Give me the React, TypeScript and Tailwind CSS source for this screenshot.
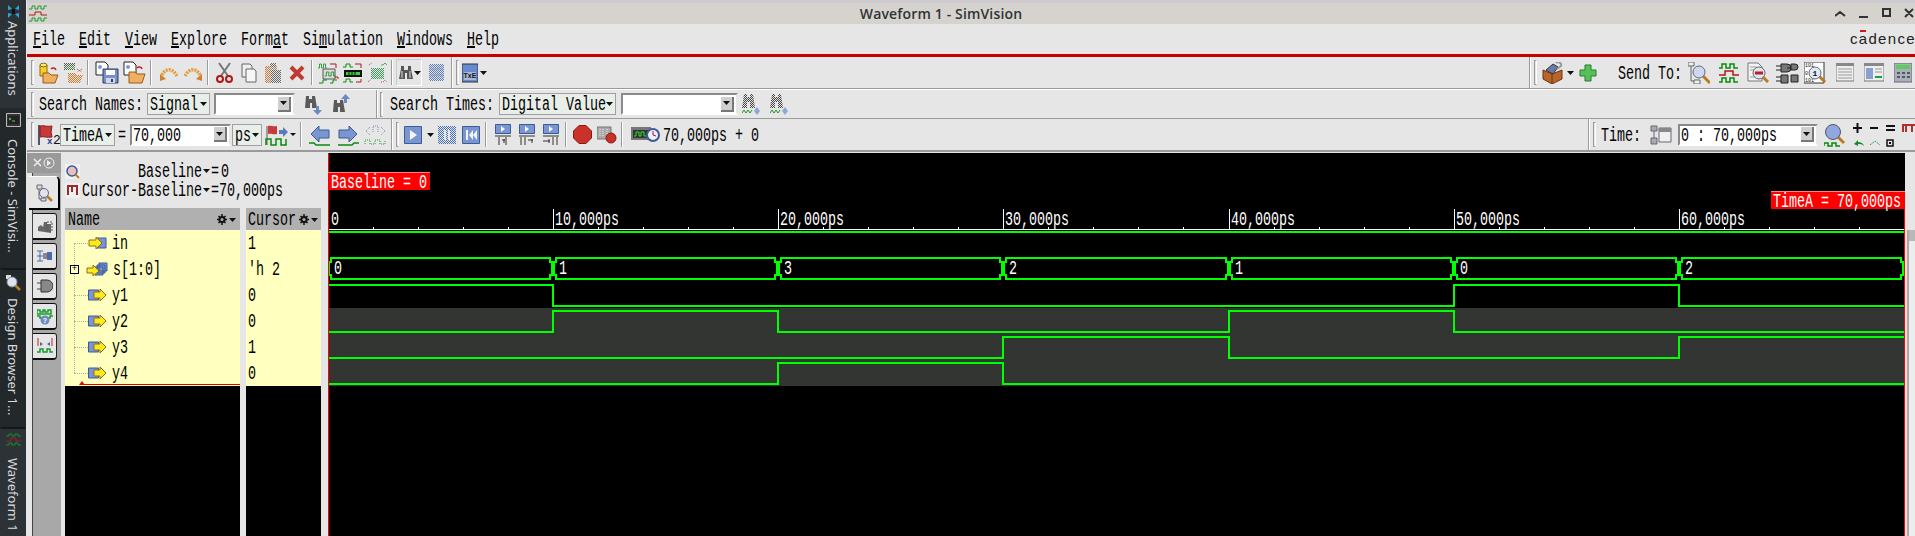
import React from 'react';

// SimVision waveform window. Toolbar text uses a squeezed mono font, it is the closest thing to the X11 bitmap font.
const ADV = 8;

function T({ text, u, className = '' }: { text: string; u?: number; className?: string }) {
  return (
    <span className={`flex h-[18px] shrink-0 ${className}`} style={{ width: text.length * ADV }}>
      <span className="block origin-left scale-x-[0.667] whitespace-pre font-['Liberation_Mono',monospace] text-[20px] leading-[20px]">
        {u === undefined ? text : (
          <>
            {text.slice(0, u)}
            <span className="underline">{text[u]}</span>
            {text.slice(u + 1)}
          </>
        )}
      </span>
    </span>
  );
}

function Ic({ w, h, className = '', children }: { w: number; h: number; className?: string; children: React.ReactNode }) {
  return (
    <svg width={w} height={h} viewBox={`0 0 ${w} ${h}`} className={`shrink-0 ${className}`}>
      {children}
    </svg>
  );
}

function Checker({ id, c }: { id: string; c: string }) {
  return (
    <defs>
      <pattern id={id} width="2" height="2" patternUnits="userSpaceOnUse">
        <rect width="1" height="1" fill={c} />
        <rect x="1" y="1" width="1" height="1" fill={c} />
      </pattern>
    </defs>
  );
}

const Handle = ({ className = '' }: { className?: string }) => (
  <div className={`h-[25px] w-[3px] shrink-0 rounded-[1px] border border-[#9a9a9a] border-r-white ${className}`} />
);
const Sep = ({ className = '' }: { className?: string }) => (
  <div className={`h-[25px] w-[2px] shrink-0 border-l border-r border-l-[#9a9a9a] border-r-white ${className}`} />
);
const VLine = ({ className = '' }: { className?: string }) => (
  <div className={`h-full w-[2px] shrink-0 border-l border-r border-l-[#9a9a9a] border-r-white ${className}`} />
);
const Caret = ({ className = '' }: { className?: string }) => (
  <Ic w={7} h={4} className={className}>
    <path d="M0 0h7L3.500 4z" fill="#111" />
  </Ic>
);

const wave = (x: number, y: number) => `M${x} ${y}h3v-4h4v4h4v-4h4v4h3`;

const OpenDb = () => (
  <Ic w={20} h={22}>
    <path d="M1 3h7v11H1z" fill="#f5d020" stroke="#8a6a10" />
    <ellipse cx="4.500" cy="3" rx="3.500" ry="1.800" fill="#ffe96a" stroke="#8a6a10" />
    <path d="M4 11h6l2 2h7l-3 8H4z" fill="#f0b060" stroke="#9a5a20" />
    <path d="M12 7a3 3 0 0 1 5 1" fill="none" stroke="#c02020" strokeWidth="1.500" />
  </Ic>
);
const OpenFaded = () => (
  <Ic w={21} h={22}>
    <Checker id="of1" c="#555" />
    <Checker id="of2" c="#d07a30" />
    <Checker id="of3" c="#3a9a3a" />
    <path d="M1 1h11v7H1z" fill="url(#of1)" />
    <path d="M5 11h7l2 2h6l-3 8H5z" fill="url(#of2)" />
    <path d="M3 4h9v3H3z" fill="url(#of3)" />
    <path d="M14 7l5 3M19 7l-5 3" stroke="#c04040" strokeDasharray="1 1" />
  </Ic>
);
const Save = () => (
  <Ic w={24} h={23}>
    <path d="M1 1h9l3 3v10H1z" fill="#fff" stroke="#222" />
    <circle cx="5" cy="6" r="2" fill="#7a9ad0" />
    <path d="M8 8h15v14H8z" fill="#7890c8" stroke="#2a3a70" />
    <path d="M11 9h9v5h-9z" fill="#fff" />
    <path d="M11 17h9v5h-9z" fill="#d0d8ea" />
    <path d="M16 18h2v3h-2z" fill="#2a3a70" />
  </Ic>
);
const SaveFolder = () => (
  <Ic w={23} h={23}>
    <path d="M1 1h9l3 3v10H1z" fill="#fff" stroke="#222" />
    <circle cx="5" cy="6" r="2" fill="#7a9ad0" />
    <path d="M6 11h6l2 2h8l-3 9H6z" fill="#f0b060" stroke="#9a5a20" />
    <path d="M14 7a3 3 0 0 1 5 1" fill="none" stroke="#c02020" strokeWidth="1.500" />
  </Ic>
);
const Undo = ({ flip = false }: { flip?: boolean }) => (
  <Ic w={18} h={17} className={flip ? '-scale-x-100' : ''}>
    <path d="M1 14C3 5 12 2 17 12" fill="none" stroke="#e0a040" strokeWidth="3.500" strokeDasharray="2 1" />
    <path d="M0 10l6 5-6 2z" fill="#d08030" />
  </Ic>
);
const Cut = () => (
  <Ic w={17} h={22}>
    <path d="M3 1l9 13M14 1L5 14" stroke="#777" strokeWidth="2" />
    <circle cx="4" cy="17" r="3" fill="none" stroke="#b01818" strokeWidth="2" />
    <circle cx="13" cy="17" r="3" fill="none" stroke="#b01818" strokeWidth="2" />
  </Ic>
);
const Copy = () => (
  <Ic w={16} h={20}>
    <path d="M1 1h8l2 2v11H1z" fill="#eee" stroke="#666" />
    <path d="M5 6h8l2 2v11H5z" fill="#f6f6f6" stroke="#666" />
  </Ic>
);
const Paste = () => (
  <Ic w={18} h={22}>
    <Checker id="pa1" c="#c07a40" />
    <Checker id="pa2" c="#666" />
    <path d="M1 4h12v17H1z" fill="url(#pa1)" />
    <path d="M6 1h6v4H6zM7 8h10v13H7z" fill="url(#pa2)" />
  </Ic>
);
const Del = () => (
  <Ic w={16} h={16}>
    <path d="M2 2l12 12M14 2L2 14" stroke="#c03a30" strokeWidth="4" />
  </Ic>
);
const WaveA = () => (
  <Ic w={21} h={22}>
    <path d={wave(0, 6)} transform="scale(.5 1)" stroke="#0a8a0a" fill="none" />
    <path d="M12 2h6v4" stroke="#b01818" fill="none" />
    <path d="M5 7h12v10H5z" fill="#ddd" stroke="#555" />
    <path d={wave(6, 14)} transform="translate(3 0) scale(.6 1)" stroke="#0a8a0a" fill="none" />
    <path d="M1 21h4v-3h4M12 21h3v-3h4" stroke="#0a8a0a" fill="none" />
    <path d="M17 15h3v2" stroke="#b01818" fill="none" />
  </Ic>
);
const WaveB = () => (
  <Ic w={21} h={22}>
    <path d="M1 5h3V2h4v3h3" stroke="#0a8a0a" fill="none" />
    <path d="M13 2h6v4" stroke="#b01818" fill="none" />
    <path d="M2 8h18v7H2z" fill="#111" />
    <path d="M4 10h14v3H4z" fill="#3ad03a" />
    <path d="M7 10v3M10 10v3M13 10v3" stroke="#111" />
    <path d="M1 20h3v-3h4v3h3" stroke="#0a8a0a" fill="none" />
    <path d="M14 20h5v-3" stroke="#b01818" fill="none" />
  </Ic>
);
const WaveC = () => (
  <Ic w={21} h={22}>
    <Checker id="wc1" c="#3a9a5a" />
    <path d="M4 6h13v11H4z" fill="url(#wc1)" />
    <path d="M14 3h2l2-2 2 2" stroke="#4ab04a" fill="none" />
    <path d="M2 3l3-2M1 20l3-3M14 20h2l2-2 2 2" stroke="#c04040" fill="none" strokeDasharray="1 1" />
  </Ic>
);
const Binoc = () => (
  <Ic w={14} h={16}>
    <path d="M2 1h3v4h4V1h3v3l2 10H8V8H6v6H0L2 4z" fill="#555" />
    <path d="M2 6h2v7H2zM10 6h2v7h-2z" fill="#999" />
  </Ic>
);
const ListFaded = () => (
  <Ic w={15} h={19}>
    <Checker id="lf1" c="#5a7ab0" />
    <path d="M0 1h15v17H0z" fill="url(#lf1)" />
    <path d="M1 6h13M1 12h13" stroke="#8aa0c8" />
  </Ic>
);
const TxE = () => (
  <Ic w={16} h={20}>
    <path d="M0 1h16v18H0z" fill="#6a8ad0" stroke="#333" />
    <path d="M2 9h12v8H2z" fill="#a8b8d8" />
    <text x="8" y="15" fontSize="7" textAnchor="middle" fontFamily="Liberation Sans" fontWeight="700" fill="#111">
      TxE
    </text>
  </Ic>
);
const ToolBox = () => (
  <Ic w={23} h={22}>
    <path d="M2 8l9 4 10-4v9l-10 5-9-5z" fill="#b8642a" stroke="#6a3410" />
    <path d="M11 12v10" stroke="#6a3410" />
    <path d="M5 8l7-6 5 3-5 7z" fill="#6a7aa8" stroke="#333" />
    <path d="M15 1a3 3 0 0 1 5 3l-4 3" fill="none" stroke="#999" strokeWidth="2" />
  </Ic>
);
const Plus = () => (
  <Ic w={18} h={18}>
    <path d="M6 1h6v5h5v6h-5v5H6v-5H1V6h5z" fill="#58c058" stroke="#2a7a2a" />
  </Ic>
);
const Lens = ({ x, y }: { x: number; y: number }) => (
  <>
    <path d={`M${x + 4} ${y + 4}l7 7`} stroke="#c07820" strokeWidth="3" />
    <circle cx={x} cy={y} r="6" fill="#cdd8f0" stroke="#667" />
  </>
);
const SendTree = () => (
  <Ic w={22} h={22}>
    <path d="M0 0h6v4H0zM6 18h6v4H6z" fill="#eee" stroke="#666" />
    <path d="M3 4v15h3" stroke="#666" fill="none" />
    <Lens x={11} y={10} />
  </Ic>
);
const SendWave = () => (
  <Ic w={20} h={22}>
    <path d="M0 6h3V2h4v4h4V2h4v4h4" stroke="#0a8a0a" fill="none" strokeWidth="1.500" />
    <path d="M0 13h6V9h8v4h6" stroke="#b01818" fill="none" strokeWidth="1.500" />
    <path d="M0 20h3v-4h4v4h4v-4h4v4h4" stroke="#0a8a0a" fill="none" strokeWidth="1.500" />
  </Ic>
);
const SendDoc = () => (
  <Ic w={22} h={22}>
    <path d="M1 1h10l4 4v14H1z" fill="#f4f4f4" stroke="#777" />
    <path d="M3 5h7M3 8h5M3 15h6" stroke="#999" />
    <path d="M15 14l6 6" stroke="#c07820" strokeWidth="3" />
    <circle cx="12" cy="11" r="6" fill="#dfe4f0" stroke="#667" />
    <path d="M8 11h8" stroke="#c02020" strokeWidth="3" />
  </Ic>
);
const SendGate = () => (
  <Ic w={23} h={22}>
    <path d="M5 2h6a4 4 0 0 1 0 8H5zM5 13h7v8H5z" fill="#777" stroke="#222" />
    <path d="M15 2h4a3 3 0 0 1 0 6h-4zM15 13h7v7h-7z" fill="#777" stroke="#222" />
    <path d="M0 4h5M0 8h5M0 15h5M0 19h5M11 6h4" stroke="#222" />
  </Ic>
);
const SendBits = () => (
  <Ic w={23} h={22}>
    <path d="M0 0h20v21H0z" fill="#fff" stroke="#333" />
    <text x="1" y="5" fontSize="5" fontFamily="Liberation Mono" fill="#111">101</text>
    <text x="1" y="13" fontSize="5" fontFamily="Liberation Mono" fill="#111">0</text>
    <text x="1" y="20" fontSize="5" fontFamily="Liberation Mono" fill="#111">101</text>
    <path d="M15 14l6 6" stroke="#c07820" strokeWidth="3" />
    <circle cx="11" cy="11" r="6" fill="#dfe8f5" stroke="#667" />
    <text x="11" y="14" fontSize="8" textAnchor="middle" fontFamily="Liberation Mono" fontWeight="700" fill="#111">1</text>
  </Ic>
);
const SendTable = () => (
  <Ic w={18} h={19}>
    <path d="M0 0h18v18H0z" fill="#eee" stroke="#777" />
    <path d="M0 0h18v3H0z" fill="#888" />
    <path d="M2 6h14M2 9h14M2 12h14M2 15h14" stroke="#999" />
  </Ic>
);
const SendPane = () => (
  <Ic w={20} h={19}>
    <path d="M0 0h20v18H0z" fill="#eee" stroke="#777" />
    <path d="M0 0h20v3H0z" fill="#888" />
    <path d="M2 5h7v11H2z" fill="#8aa0d0" />
    <path d="M11 6h7M11 9h7" stroke="#999" />
    <path d="M11 14h7" stroke="#18a048" strokeWidth="2" />
  </Ic>
);
const SendCalc = () => (
  <Ic w={18} h={20}>
    <path d="M0 0h18v19H0z" fill="#aab0ba" stroke="#667" />
    <path d="M2 2h14v4H2z" fill="#58d058" />
    <path d="M3 9h3v2H3zM8 9h3v2H8zM13 9h3v2h-3zM3 13h3v2H3zM8 13h3v2H8zM13 13h3v2h-3z" fill="#556" />
  </Ic>
);
const SearchDown = () => (
  <Ic w={18} h={22}>
    <g transform="translate(0 2)">
      <path d="M1 1h3v3h3V1h3l2 12H7V8H5v5H0z" fill="#5a5a5a" />
    </g>
    <path d="M11 13h3v4h3l-4.500 5L8 17h3z" fill="#6a8ac0" />
  </Ic>
);
const SearchUp = () => (
  <Ic w={18} h={22}>
    <g transform="translate(0 6)">
      <path d="M1 1h3v3h3V1h3l2 12H7V8H5v5H0z" fill="#5a5a5a" />
    </g>
    <path d="M11 10h3V6h3l-4.500-5L8 6h3z" fill="#6a8ac0" />
  </Ic>
);
const SearchFaded = () => (
  <Ic w={22} h={22}>
    <Checker id="sf1" c="#444" />
    <path d="M2 1h3v3h3V1h3l2 14H8V9H5v6H0z" fill="url(#sf1)" />
    <path d="M0 20l2-3 2 3 2-3 2 3 2-3" stroke="#1a9a2a" fill="none" />
    <path d="M15 14l3 4-3 4-3-4z" fill="#8aa8d8" />
  </Ic>
);
const FlagX2 = () => (
  <Ic w={23} h={24}>
    <path d="M2 2v20" stroke="#556" strokeWidth="2" />
    <path d="M3 3c4-1 6 1 12 0l-1 6 1 5c-5 1-8-1-12 0z" fill="#c83a3a" stroke="#8a1a1a" />
    <text x="10" y="21" fontSize="9" fontWeight="700" fontFamily="Liberation Mono" fill="#223a8a">x</text>
    <text x="16" y="21" fontSize="13" fontFamily="Liberation Mono" fill="#111">2</text>
  </Ic>
);
const FlagWave = () => (
  <Ic w={31} h={22} >
    <path d="M2 2v19" stroke="#556" />
    <path d="M3 2c3-1 5 1 9 0v8c-4 1-6-1-9 0z" fill="#c83a3a" />
    <path d="M14 6h4V3l5 5-5 5v-3h-4z" fill="#5a7ab8" />
    <path d="M1 21v-6h5v6h5v-6h5v6h5v-6" fill="none" stroke="#0a8a0a" strokeWidth="1.500" />
    <path d="M25 9h6l-3 3z" fill="#111" />
  </Ic>
);
const ArrowGo = ({ flip = false }: { flip?: boolean }) => (
  <Ic w={21} h={22} className={flip ? '-scale-x-100' : ''}>
    <path d="M2 10l8-8v4h10v8H10v4z" fill="#7a96d0" stroke="#3a5a98" />
    <path d="M0 19h5l2 2h14" fill="none" stroke="#0a8a0a" strokeWidth="1.500" />
  </Ic>
);
const CursorFaded = () => (
  <Ic w={23} h={22}>
    <path d="M6 3L2 7l4 4M17 3l4 4-4 4" fill="none" stroke="#7a8ab8" strokeDasharray="1 1" />
    <path d="M9 8V2h5v6" fill="none" stroke="#7a8ab8" strokeDasharray="1 1" />
    <path d="M1 20v-4h5v4h5v-4h5v4h5v-4" fill="none" stroke="#2a9a3a" strokeDasharray="1 1" />
  </Ic>
);
const PlayBtn = ({ kind }: { kind: 'play' | 'rew' }) => (
  <Ic w={18} h={18}>
    <path d="M.5.500h17v17H.5z" fill="#7a96d0" stroke="#3a5a98" />
    {kind === 'play' ? <path d="M6 4l7 5-7 5z" fill="#f4f6fa" /> : <path d="M4 4h2v10H4zM7 9l4-5v10zM11 9l4-5v10z" fill="#f4f6fa" />}
  </Ic>
);
const PauseFaded = () => (
  <Ic w={18} h={18}>
    <Checker id="pf1" c="#4a70b8" />
    <path d="M0 0h18v18H0z" fill="url(#pf1)" />
    <path d="M6 4h2v10H6zM10 4h2v10h-2z" fill="#e6e6e6" />
  </Ic>
);
const StepBtn = ({ kind }: { kind: number }) => (
  <Ic w={16} h={22}>
    <path d="M.5.500h15v9H.5z" fill="#7a96d0" stroke="#3a5a98" />
    <path d="M6 2l4 3-4 3z" fill="#f4f6fa" />
    <path d="M0 12h16" stroke="#333" />
    {kind === 0 && <path d="M4 13v8M11 13v8M7 16h3M9 15v4" stroke="#333" />}
    {kind === 1 && <path d="M2 13v8M6 13v8M9 16h5M13 15v4" stroke="#333" />}
    {kind === 2 && <path d="M0 17h7M6 15v4M10 13v8M14 13v8" stroke="#333" />}
  </Ic>
);
const Stop = () => (
  <Ic w={19} h={19}>
    <path d="M6 .500h7L18.500 6v7L13 18.500H6L.5 13V6z" fill="#c83228" stroke="#8a1a10" />
  </Ic>
);
const StopGrid = () => (
  <Ic w={20} h={19}>
    <path d="M0 2h14v12H0z" fill="#aaa" stroke="#777" />
    <path d="M3 4v8M6 4v8M10 4v8" stroke="#eee" strokeDasharray="1 1" />
    <circle cx="14" cy="13" r="5" fill="#c83228" stroke="#8a1a10" />
  </Ic>
);
const Timer = () => (
  <Ic w={29} h={17}>
    <path d="M0 1h20v13H0z" fill="#777" />
    <path d="M2 4h16v8H2z" fill="#333" />
    <path d="M3 10h2V6h3v4h2V6h3v4h3" fill="none" stroke="#30e030" />
    <circle cx="22" cy="9" r="6" fill="#eef" stroke="#3a5a98" strokeWidth="2" />
    <path d="M22 5v4l3 1" stroke="#b01818" fill="none" />
  </Ic>
);
const TimeIc = () => (
  <Ic w={22} h={22}>
    <path d="M1 2h6v5H1zM1 14h6v6H1z" fill="#aaa" stroke="#667" />
    <path d="M4 7v7" stroke="#667" />
    <path d="M9 4h12v14H9z" fill="#f0f0f0" stroke="#667" />
    <path d="M9 4h12v4H9z" fill="#888" />
  </Ic>
);
const ZoomWave = () => (
  <Ic w={21} h={24}>
    <path d="M13 13l7 7" stroke="#c07820" strokeWidth="3" />
    <circle cx="9" cy="9" r="7.500" fill="#90a8e0" stroke="#556" />
    <path d="M0 23v-3h4v3h4v-3h4v3h4" fill="none" stroke="#0a8a0a" strokeWidth="1.500" />
  </Ic>
);
const Combo = ({ className = '', text }: { className?: string; text?: string }) => (
  <div className={`flex h-[22px] shrink-0 items-center border-2 border-[#8a8a8a] border-r-[#e6e6e6] border-b-white bg-white pl-[1px] ${className}`}>
    {text && <T text={text} />}
    <div className="ml-auto mr-[2px] flex h-[15px] w-[13px] items-center justify-center border-r-2 border-b-2 border-r-[#777] border-b-[#777] bg-[#cfcfcf]">
      <Caret />
    </div>
  </div>
);
const Drop = ({ text, className = '' }: { text: string; className?: string }) => (
  <div className={`flex h-[22px] shrink-0 items-center border border-[#a0a0a0] bg-[#e8eee8] pl-[2px] ${className}`}>
    <T text={text} />
    <Caret className="ml-auto mr-[2px]" />
  </div>
);

const Gear = ({ className = '' }: { className?: string }) => (
  <svg width="20" height="11" viewBox="0 0 20 11" className={className}>
    <path d="M5 0v11M0 5.500h10M1.500 2l7 7M8.500 2l-7 7" stroke="#111" strokeWidth="1.500" />
    <circle cx="5" cy="5.500" r="3.500" fill="#111" />
    <circle cx="5" cy="5.500" r="1.500" fill="#b0b0b0" />
    <path d="M12 4h7l-3.500 4z" fill="#111" />
  </svg>
);

const DockIconA = () => (
  <Ic w={15} h={15}>
    <path d="M2 1l4 4-4 1zM13 1L9 5l4 1zM2 14l4-4-4-1zM13 14L9 10l4-1z" fill="#2aa4e0" />
    <path d="M6 5h3v5H6z" fill="#111" />
  </Ic>
);
const DockConsole = () => (
  <Ic w={15} h={14}>
    <path d="M.5.500h14v13H.5z" fill="#333" stroke="#bbb" />
    <path d="M2 3h11v8H2z" fill="#222" />
    <path d="M3 5l2 1-2 1M6 8h3" stroke="#6c6" fill="none" />
  </Ic>
);
const DockWave = () => (
  <Ic w={15} h={14}>
    <path d="M0 3h3V1h3v2h3V1h3v2h3M0 12h3v-2h3v2h3v-2h3v2h3" stroke="#1a8a2a" fill="none" />
    <path d="M0 8h5V5h5v3h5" stroke="#a02020" fill="none" />
  </Ic>
);
const DockLens = () => (
  <Ic w={15} h={16}>
    <path d="M0 0h5v4H0z" fill="#ddd" />
    <path d="M9 10l5 5" stroke="#c07820" strokeWidth="2.500" />
    <circle cx="6" cy="7" r="5" fill="#dde4f0" stroke="#889" />
  </Ic>
);

function DockItem({ box, gap, text, icon }: { box: string; gap: string; text: string; icon: React.ReactNode }) {
  return (
    <div className={`flex flex-col items-center ${box}`}>
      {icon}
      <span className={`whitespace-nowrap font-['Noto_Sans',sans-serif] text-[13px] leading-[22px] text-[#d8dbdb] [writing-mode:vertical-rl] ${gap}`}>
        {text}
      </span>
    </div>
  );
}

function Dock() {
  return (
    <div className="flex h-[536px] w-[27px] shrink-0 flex-col overflow-hidden border-r border-r-[#e6e6e6] bg-[#2c3236]">
      <DockItem box="h-[108px] pt-[4px]" gap="mt-[2px]" text="Applications" icon={<DockIconA />} />
      <DockItem box="h-[162px] rounded-[2px] border-b-2 border-b-[#14181a] bg-[#23282b] pt-[5px]" gap="mt-[12px]" text="Console - SimVisi..." icon={<DockConsole />} />
      <DockItem box="h-[159px] rounded-[2px] border-b-2 border-b-[#14181a] bg-[#23282b] pt-[5px]" gap="mt-[7px]" text="Design Browser 1..." icon={<DockLens />} />
      <DockItem box="h-[107px] pt-[4px]" gap="mt-[11px]" text="Waveform 1" icon={<DockWave />} />
    </div>
  );
}

const MENUS: [string, number][] = [
  ['File', 0], ['Edit', 0], ['View', 0], ['Explore', 0], ['Format', 4], ['Simulation', 2], ['Windows', 0], ['Help', 0],
];

function TitleBar() {
  return (
    <div className="relative flex h-[24px] items-center border-t-[3px] border-t-[#cecbd0] bg-[#d6d3ce]">
      <Ic w={18} h={17} className="ml-[2px]">
        <path d="M0 4h3V1h3v3h3V1h3v3h3V1h3" stroke="#1a9a2a" fill="none" />
        <path d="M0 10h6V7h6v3h6" stroke="#b01818" fill="none" />
        <path d="M0 16h3v-3h3v3h3v-3h3v3h3v-3h3" stroke="#1a9a2a" fill="none" />
      </Ic>
      <div className="flex-1 text-center font-['Open_Sans',sans-serif] text-[14px] font-semibold leading-none tracking-[0.15px] text-[#2e3436]">
        Waveform 1 - SimVision
      </div>
      <svg width="80" height="14" viewBox="0 0 80 14" className="mb-[1px] shrink-0">
        <path d="M0 10l5-4 5 4M24 11h9M48 3h7v7h-7zM70 3l8 8M78 3l-8 8" fill="none" stroke="#2e3436" strokeWidth="2" />
      </svg>
    </div>
  );
}

function MenuBar() {
  return (
    <div className="flex h-[30px] items-center pl-[6px]">
      {MENUS.map(([m, u]) => (
        <T key={m} text={m} u={u} className="mr-[14px]" />
      ))}
      <div className="ml-auto h-[18px] w-[65px] whitespace-nowrap font-['Liberation_Sans',sans-serif] text-[15px] leading-[18px] tracking-[1.300px] text-[#222]">
        c<span className="relative">a<span className="absolute left-[1px] top-[0px] h-[2px] w-[6px] bg-[#c81e1e]" /></span>dence
      </div>
    </div>
  );
}

function ToolRow1() {
  return (
    <div className="flex h-[32px] items-center border-b border-b-[#9a9a9a] pl-[4px]">
      <Handle />
      <div className="ml-[5px]"><OpenDb /></div>
      <div className="ml-[4px]"><OpenFaded /></div>
      <Sep className="ml-[3px]" />
      <div className="ml-[6px]"><Save /></div>
      <div className="ml-[4px]"><SaveFolder /></div>
      <Sep className="ml-[4px]" />
      <div className="ml-[8px]"><Undo /></div>
      <div className="ml-[6px]"><Undo flip /></div>
      <Sep className="ml-[5px]" />
      <div className="ml-[7px]"><Cut /></div>
      <div className="ml-[8px]"><Copy /></div>
      <div className="ml-[7px]"><Paste /></div>
      <div className="ml-[7px]"><Del /></div>
      <Sep className="ml-[6px]" />
      <div className="ml-[5px]"><WaveA /></div>
      <div className="ml-[3px]"><WaveB /></div>
      <div className="ml-[4px]"><WaveC /></div>
      <Sep className="ml-[3px]" />
      <div className="ml-[3px] flex h-[27px] w-[26px] items-center gap-[1px] border border-[#ccc] border-r-white border-b-white pl-[2px]">
        <Binoc />
        <Caret />
      </div>
      <div className="ml-[7px]"><ListFaded /></div>
      <VLine className="ml-[7px]" />
      <Handle className="ml-[3px]" />
      <div className="ml-[3px]"><TxE /></div>
      <Caret className="ml-[2px]" />
      <VLine className="ml-auto" />
      <Handle className="ml-[3px]" />
      <div className="ml-[4px]"><ToolBox /></div>
      <Caret className="ml-[3px]" />
      <div className="ml-[5px]"><Plus /></div>
      <T text="Send To:" className="ml-[21px]" />
      <div className="ml-[6px]"><SendTree /></div>
      <div className="ml-[9px]"><SendWave /></div>
      <div className="ml-[8px]"><SendDoc /></div>
      <div className="ml-[7px]"><SendGate /></div>
      <div className="ml-[5px]"><SendBits /></div>
      <div className="ml-[9px]"><SendTable /></div>
      <div className="ml-[10px]"><SendPane /></div>
      <div className="ml-[10px]"><SendCalc /></div>
      <div className="w-[3px] shrink-0" />
    </div>
  );
}

function ToolRow2() {
  return (
    <div className="flex h-[30px] items-center border-t border-t-white border-b border-b-[#9a9a9a] pl-[4px]">
      <Handle />
      <T text="Search Names:" className="ml-[5px]" />
      <Drop text="Signal" className="ml-[4px] w-[63px]" />
      <Combo className="ml-[4px] w-[81px]" />
      <div className="ml-[10px]"><SearchDown /></div>
      <div className="ml-[10px]"><SearchUp /></div>
      <VLine className="ml-[25px]" />
      <Handle className="ml-[2px]" />
      <T text="Search Times:" className="ml-[7px]" />
      <Drop text="Digital Value" className="ml-[5px] w-[117px]" />
      <Combo className="ml-[5px] w-[117px]" />
      <div className="ml-[4px]"><SearchFaded /></div>
      <div className="ml-[6px]"><SearchFaded /></div>
    </div>
  );
}

function ToolRow3() {
  return (
    <div className="flex h-[31px] items-center pl-[4px]">
      <Handle />
      <div className="ml-[3px]"><FlagX2 /></div>
      <Drop text="TimeA" className="w-[55px]" />
      <T text="=" className="ml-[3px]" />
      <Combo text="70,000" className="ml-[4px] w-[101px]" />
      <Drop text="ps" className="ml-[1px] w-[30px]" />
      <div className="ml-[3px]"><FlagWave /></div>
      <Sep className="ml-[4px]" />
      <div className="ml-[7px]"><ArrowGo /></div>
      <div className="ml-[8px]"><ArrowGo flip /></div>
      <div className="ml-[5px]"><CursorFaded /></div>
      <VLine className="ml-[4px]" />
      <Handle className="ml-[3px]" />
      <div className="ml-[5px]"><PlayBtn kind="play" /></div>
      <Caret className="ml-[5px]" />
      <div className="ml-[4px]"><PauseFaded /></div>
      <div className="ml-[6px]"><PlayBtn kind="rew" /></div>
      <Sep className="ml-[5px]" />
      <div className="ml-[8px]"><StepBtn kind={0} /></div>
      <div className="ml-[8px]"><StepBtn kind={1} /></div>
      <div className="ml-[8px]"><StepBtn kind={2} /></div>
      <Sep className="ml-[6px]" />
      <div className="ml-[6px]"><Stop /></div>
      <div className="ml-[5px]"><StopGrid /></div>
      <Sep className="ml-[4px]" />
      <div className="ml-[8px]"><Timer /></div>
      <T text="70,000ps + 0" className="ml-[3px]" />
      <VLine className="ml-auto" />
      <Handle className="ml-[3px]" />
      <T text="Time:" className="ml-[5px]" />
      <div className="ml-[9px]"><TimeIc /></div>
      <Combo text="0 : 70,000ps" className="ml-[6px] w-[140px]" />
      <div className="ml-[6px]"><ZoomWave /></div>
      <Ic w={62} h={26} className="ml-[8px]">
        <path d="M0 6h9M4.500 1v10M17 6h8M33 4h9M33 8h9" stroke="#111" strokeWidth="2" />
        <path d="M50 10V3h12M53 3v7M59 3v7" stroke="#b03030" strokeWidth="2" fill="none" />
        <path d="M1 22l4-4v2c3 0 5 1 6 4-2-2-4-2-6-2v2z" fill="#1a8a2a" />
        <path d="M17 23l5-4 5 4" stroke="#3a9a4a" fill="none" strokeDasharray="2 1" />
        <path d="M34 18h6v6h-6z" fill="none" stroke="#111" strokeWidth="1.500" />
        <path d="M36 20h2v2h-2z" fill="#111" />
      </Ic>
    </div>
  );
}

const SigIn = () => (
  <Ic w={19} h={14}>
    <path d="M9 2h9v10H9z" fill="#7a96d0" stroke="#3a5a98" />
    <path d="M1 4h7V1l6 6-6 6v-3H1z" fill="#f8ec20" stroke="#9a6a10" />
  </Ic>
);
const SigOut = () => (
  <Ic w={19} h={14}>
    <path d="M.5 2h10v10H.5z" fill="#7a96d0" stroke="#3a5a98" />
    <path d="M6 4h6V1l6 6-6 6v-3H6z" fill="#f8ec20" stroke="#9a6a10" />
  </Ic>
);
const SigBus = () => (
  <Ic w={22} h={15}>
    <path d="M13 1h8v8h-8zM11 3h8v8h-8zM9 5h8v8H9z" fill="#7a96d0" stroke="#3a5a98" />
    <path d="M1 6h6V3l6 6-6 5v-3H1z" fill="#f8ec20" stroke="#9a6a10" />
  </Ic>
);

const ROWS = [
  { name: 'in', val: '1', icon: <SigIn /> },
  { name: 's[1:0]', val: "'h 2", icon: <SigBus />, bus: true },
  { name: 'y1', val: '0', icon: <SigOut /> },
  { name: 'y2', val: '0', icon: <SigOut /> },
  { name: 'y3', val: '1', icon: <SigOut /> },
  { name: 'y4', val: '0', icon: <SigOut /> },
];

function SignalColumns() {
  return (
    <div className="ml-[4px] flex w-[256px] shrink-0 flex-col">
      <div className="h-[55px]">
        <div className="mt-[10px] flex h-[16px] items-center">
          <Ic w={15} h={15}>
            <path d="M0 0h15v15H0z" fill="#f0f0f0" />
            <circle cx="7" cy="7" r="5" fill="#e8c0c0" stroke="#3a5a98" strokeWidth="1.500" />
            <path d="M10 10l4 4" stroke="#c07820" strokeWidth="2" />
          </Ic>
          <T text="Baseline" className="ml-[58px]" />
          <Caret className="ml-[1px]" />
          <T text="=" className="ml-[1px]" />
          <T text="0" className="ml-[2px]" />
        </div>
        <div className="mt-[3px] flex h-[16px] items-center">
          <Ic w={15} h={15}>
            <path d="M0 0h15v15H0z" fill="#f0f0f0" />
            <path d="M3 12V3h9v9M7 3v6" stroke="#a02828" strokeWidth="2" fill="none" />
          </Ic>
          <T text="Cursor-Baseline" className="ml-[2px]" />
          <Caret className="ml-[1px]" />
          <T text="=70,000ps" className="ml-[1px]" />
        </div>
      </div>
      <div className="flex flex-1 gap-[6px]">
        <div className="flex w-[175px] flex-col">
          <div className="flex h-[22px] items-center bg-[#b0b0b0] pl-[3px]">
            <T text="Name" />
            <Gear className="ml-auto mr-[3px]" />
          </div>
          <div className="relative h-[156px] bg-[#ffffbf]">
            <div className="absolute left-[9px] top-[13px] h-[130px] border-l border-dotted border-l-[#b0b0a0]" />
            {ROWS.map(r => (
              <div key={r.name} className="relative flex h-[26px] items-center">
                {r.bus ? (
                  <>
                    <div className="absolute left-[5px] top-[9px] flex h-[9px] w-[9px] items-center justify-center border border-black bg-[#ffffbf] font-['Liberation_Mono',monospace] text-[9px] leading-none">+</div>
                    <div className="ml-[21px]">{r.icon}</div>
                  </>
                ) : (
                  <>
                    <div className="ml-[9px] w-[14px] border-t border-dotted border-t-[#b0b0a0]" />
                    {r.icon}
                  </>
                )}
                <T text={r.name} className="ml-[5px]" />
              </div>
            ))}
            <div className="absolute bottom-[1px] left-[15px] right-0 h-[1px] bg-[#e00000]" />
            <div className="absolute bottom-[1px] left-[14px] h-0 w-0 border-x-[3px] border-b-[4px] border-x-transparent border-b-[#f00000]" />
          </div>
          <div className="flex-1 bg-black" />
        </div>
        <div className="flex w-[75px] flex-col">
          <div className="flex h-[22px] items-center bg-[#b0b0b0] pl-[2px]">
            <T text="Cursor" />
            <Gear className="ml-[3px]" />
          </div>
          <div className="h-[156px] bg-[#ffffbf]">
            {ROWS.map(r => (
              <div key={r.name} className="flex h-[26px] items-center pl-[2px]">
                <T text={r.val} />
              </div>
            ))}
          </div>
          <div className="flex-1 bg-black" />
        </div>
      </div>
    </div>
  );
}

const TabIcons = [
  <Ic w={16} h={16} key="a">
    <path d="M1 13v-4l3-2 2 2 1-5h3v2h4v9z" fill="#666" />
    <path d="M10 4h5v9h-5z" fill="none" stroke="#555" strokeDasharray="2 1" />
  </Ic>,
  <Ic w={16} h={16} key="b">
    <path d="M0 3h6M0 8h6M0 13h6M3 3v10" stroke="#4a6aa8" fill="none" />
    <path d="M6 5h4v6H6z" fill="#888" />
    <path d="M10 4h5v8h-5z" fill="#4a6aa8" />
  </Ic>,
  <Ic w={16} h={16} key="c">
    <path d="M0 5h4M0 11h4" stroke="#444" />
    <path d="M4 2h6a6 6 0 0 1 0 12H4z" fill="#888" stroke="#333" />
  </Ic>,
  <Ic w={16} h={17} key="d">
    <path d="M0 6V2h3v2h3V2h2v2h3V2h3v4zM0 6" fill="none" stroke="#1a9a2a" strokeWidth="1.500" />
    <path d="M0 8h3v2h3M10 10h3V8h3" fill="none" stroke="#1a9a2a" strokeWidth="1.500" />
    <circle cx="8" cy="12" r="4.500" fill="#6a8ac0" />
    <text x="8" y="15" fontSize="7" textAnchor="middle" fontFamily="Liberation Sans" fontWeight="700" fill="#fff">?</text>
  </Ic>,
  <Ic w={16} h={16} key="e">
    <path d="M1 0v8M15 0v8" stroke="#d02020" />
    <path d="M3 4l3 2-3 2zM13 4l-3 2 3 2z" fill="#4a6aa8" />
    <path d="M0 14h3v-3h3v3h4v-3h3v3h3" fill="none" stroke="#1a9a2a" strokeWidth="1.500" />
  </Ic>,
];

function SideTabs() {
  return (
    <div className="flex w-[34px] shrink-0 flex-col">
      <div className="flex h-[20px] items-center justify-center gap-[3px] bg-[#9a9a9a]">
        <svg width="22" height="12" viewBox="0 0 22 12">
          <path d="M1 2l7 7M8 2L1 9" stroke="#eee" strokeWidth="1.500" />
          <circle cx="16" cy="6" r="5" fill="none" stroke="#eee" />
          <path d="M14 3l4 3-4 3z" fill="#eee" />
        </svg>
      </div>
      <div className="flex flex-1">
        <div className="w-[5px] shrink-0" />
        <div className="flex flex-1 flex-col gap-[3px] border-l border-l-[#444] bg-[#a8a8a8] pt-[3px]">
          <div className="-ml-[4px] flex h-[34px] w-[31px] items-center justify-center rounded-tr-[5px] border-t border-r-2 border-b-2 border-t-white border-r-black border-b-black bg-[#e6e6e6]">
            <Ic w={18} h={18}>
              <path d="M2 1h5v4H2zM6 14h5v3H6z" fill="#ddd" stroke="#667" />
              <path d="M4 5v10h2" stroke="#667" fill="none" />
              <path d="M12 12l5 5" stroke="#c07820" strokeWidth="2.500" />
              <circle cx="9" cy="9" r="4.500" fill="#dde4f0" stroke="#667" />
            </Ic>
          </div>
          {TabIcons.map((ic, i) => (
            <div key={i} className="flex h-[27px] w-[24px] items-center justify-center rounded-br-[4px] rounded-tr-[3px] border-t border-r border-b-2 border-t-[#111] border-r-[#222] border-b-[#111] bg-[#e6e6e6]">
              {ic}
            </div>
          ))}
        </div>
      </div>
    </div>
  );
}

const TICKS = [328, 553, 778, 1003, 1229, 1454, 1679];
const END = 1904;

// x position of each transition, then levels per 10,000ps slot
function digital(hiY: number, loY: number, vals: number[]) {
  let d = '';
  vals.forEach((v, i) => {
    const y = v ? hiY : loY;
    d += i === 0 ? `M${TICKS[0]} ${y}` : `V${y}`;
    d += `H${TICKS[i + 1] ?? END}`;
  });
  return d;
}

function busPath(a: number, b: number) {
  const t = 258, bt = 279;
  return `M${a + 3} ${t}H${b - 3}V${t + 4}H${b - 1}V${bt - 4}H${b - 3}V${bt}H${a + 3}V${bt - 4}H${a + 1}V${t + 4}H${a + 3}Z`;
}

const LABELS = ['0', '10,000ps', '20,000ps', '30,000ps', '40,000ps', '50,000ps', '60,000ps'];
const BUS = ['0', '1', '3', '2', '1', '0', '2'];

const minorTicks: number[] = [];
TICKS.forEach(t => {
  for (let k = 1; k < 5; k++) minorTicks.push(t + k * 45);
});

function WaveCanvas() {
  return (
    <div className="relative h-full w-[1577px] shrink-0 overflow-hidden bg-black text-white">
      <svg width="1577" height="383" viewBox="328 153 1577 383" className="absolute inset-0" shapeRendering="crispEdges">
        <rect x="329" y="308" width="1575" height="78" fill="#333533" />
        <rect x="328" y="229" width="1576" height="1" fill="#fff" />
        {TICKS.slice(1).map(t => <rect key={t} x={t} y="209" width="1" height="20" fill="#fff" />)}
        {minorTicks.map(t => <rect key={t} x={t} y="227" width="1" height="2" fill="#fff" />)}
        <g fill="none" stroke="#00ff00" strokeWidth="2">
          <path d="M329 232H1904" />
          {TICKS.map((t, i) => <path key={t} d={busPath(t, TICKS[i + 1] ?? END)} />)}
          <path d={digital(285, 306, [1, 0, 0, 0, 0, 1, 0])} />
          <path d={digital(311, 332, [0, 1, 0, 0, 1, 0, 0])} />
          <path d={digital(337, 358, [0, 0, 0, 1, 0, 0, 1])} />
          <path d={digital(363, 384, [0, 0, 1, 0, 0, 0, 0])} />
        </g>
        <rect x="328" y="153" width="1" height="383" fill="#f00" />
        <rect x="1904" y="209" width="1" height="327" fill="#f00" />
      </svg>
      <div className="absolute left-0 top-[19px] flex h-[18px] w-[102px] items-center border-t border-t-[#ff8080] bg-[#f00] pl-[3px]">
        <T text="Baseline = 0" />
      </div>
      <div className="absolute left-[1443px] top-[38px] flex h-[18px] w-[134px] items-center border-t border-t-[#ff8080] bg-[#f00] pl-[2px]">
        <T text="TimeA = 70,000ps" />
      </div>
      {LABELS.map((l, i) => (
        <div key={l} className="absolute top-[57px]" style={{ left: TICKS[i] - 328 + (i ? 2 : 3) }}>
          <T text={l} />
        </div>
      ))}
      {BUS.map((b, i) => (
        <div key={i} className="absolute top-[106px]" style={{ left: TICKS[i] - 328 + 6 }}>
          <T text={b} />
        </div>
      ))}
    </div>
  );
}

function Scrollbar() {
  return (
    <div className="flex h-full w-[10px] shrink-0 flex-col">
      <div className="h-[77px]" />
      <div className="flex flex-1">
        <div className="w-[2px]" />
        <div className="w-[2px] bg-[#a8a8a8]" />
        <div className="flex-1">
          <div className="h-[11px] bg-[#b8b8b8]" />
          <div className="h-full bg-[#ededed]" />
        </div>
      </div>
    </div>
  );
}

export default function App() {
  return (
    <div className="flex h-[536px] w-[1915px] overflow-hidden bg-[#e6e6e6] text-black">
      <Dock />
      <div className="flex min-w-0 flex-1 flex-col">
        <TitleBar />
        <MenuBar />
        <div className="h-[3px] bg-[#c80000]" />
        <ToolRow1 />
        <ToolRow2 />
        <ToolRow3 />
        <div className="h-[3px] border-t-2 border-t-[#9a9a9a]" />
        <div className="flex min-h-0 flex-1">
          <SideTabs />
          <SignalColumns />
          <div className="ml-[7px] flex h-full">
            <WaveCanvas />
            <Scrollbar />
          </div>
        </div>
      </div>
    </div>
  );
}
